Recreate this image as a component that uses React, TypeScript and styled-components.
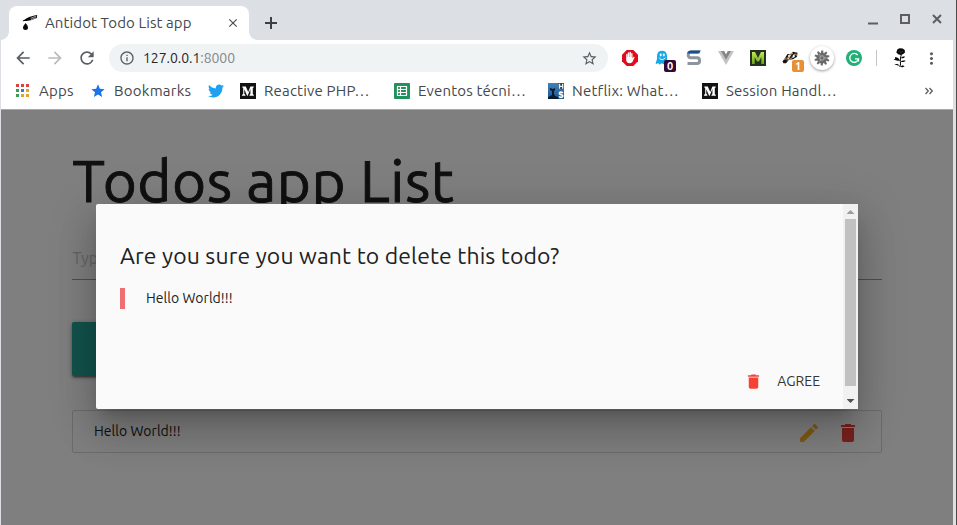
import React from 'react';
import styled, { createGlobalStyle } from 'styled-components';
import {
  MdArrowBack, MdArrowForward, MdRefresh, MdInfoOutline, MdStarBorder, MdStar,
  MdDelete, MdEdit, MdMoreVert, MdClose,
} from 'react-icons/md';
import { FaTwitter } from 'react-icons/fa';

const Global = createGlobalStyle`
  * { box-sizing: border-box; }
  body { margin: 0; overflow: hidden; font-family: Ubuntu, "Noto Sans", sans-serif; }
  svg { display: block; flex: none; }
`;

const Window = styled.div`
  width: 957px;
  height: 525px;
  display: flex;
  flex-direction: column;
  overflow: hidden;
  background: #dcdfe4;
  border-right: 1px solid #4b4b49;
`;

const Label = styled.span<{ $size: number; $spacing?: number; $color?: string }>`
  font-size: ${p => p.$size}px;
  letter-spacing: ${p => p.$spacing ?? 0}px;
  color: ${p => p.$color ?? '#45484c'};
  line-height: 1.2;
  white-space: pre;
`;

const TabStrip = styled.div`
  height: 40px;
  flex: none;
  display: flex;
  align-items: flex-end;
  padding-left: 9px;
`;

const Tab = styled.div`
  position: relative;
  width: 240px;
  height: 34px;
  border-radius: 8px 8px 0 0;
  background: #fff;
  display: flex;
  align-items: center;
  padding: 0 9px 0 13px;
  &::before, &::after {
    content: '';
    position: absolute;
    bottom: 0;
    width: 8px;
    height: 8px;
  }
  &::before { left: -8px; background: radial-gradient(circle at 0 0, transparent 7.5px, #fff 8px); }
  &::after { right: -8px; background: radial-gradient(circle at 100% 0, transparent 7.5px, #fff 8px); }
`;

const TabTitle = styled.div`
  flex: 1;
  display: flex;
  padding-left: 7px;
`;

const NewTab = styled.div`
  width: 44px;
  height: 34px;
  display: grid;
  place-items: center;
`;

const WindowControls = styled.div`
  margin-left: auto;
  height: 40px;
  display: flex;
  padding-right: 3px;
`;

const WindowButton = styled.div`
  width: 32px;
  height: 38px;
  display: grid;
  place-items: center;
`;

const Toolbars = styled.div`
  flex: none;
  width: 952px;
  margin-left: 1px;
  height: 70px;
  background: #fff;
  border-bottom: 1px solid #a9a9a9;
`;

const AddressBar = styled.div`
  height: 36px;
  display: flex;
  align-items: center;
  padding-left: 6px;
`;

const Slot = styled.div<{ $width?: number; $color?: string }>`
  position: relative;
  width: ${p => p.$width ?? 32}px;
  height: 32px;
  flex: none;
  display: grid;
  place-items: center;
  color: ${p => p.$color ?? '#5a5d62'};
`;

const Omnibox = styled.div`
  width: 499px;
  height: 28px;
  margin: 0 6px 0 6px;
  border-radius: 14px;
  background: #f0f3f4;
  display: flex;
  align-items: center;
  padding: 0 10px 0 10px;
  color: #5a5d62;
`;

const Url = styled.div`
  flex: 1;
  display: flex;
  padding-left: 8px;
`;

const Badge = styled.span<{ $bg: string }>`
  position: absolute;
  left: 18px;
  top: 18px;
  width: 12px;
  height: 12px;
  border-radius: 2px;
  background: ${p => p.$bg};
  color: #fff;
  font: bold 11px/12px Ubuntu, "Noto Sans", sans-serif;
  text-align: center;
`;

const Halo = styled.div`
  width: 24px;
  height: 24px;
  border-radius: 50%;
  background: #fff;
  box-shadow: 0 1px 3px rgba(0, 0, 0, 0.4);
  display: grid;
  place-items: center;
`;

const Divider = styled.div`
  width: 1px;
  height: 16px;
  margin: 0 7px 0 6px;
  background: #c4c7ca;
`;

const BookmarksBar = styled.div`
  height: 30px;
  display: flex;
  align-items: center;
  padding-left: 15px;
`;

const Bookmark = styled.div<{ $width: number; $gap?: number }>`
  width: ${p => p.$width}px;
  flex: none;
  display: flex;
  align-items: center;
  gap: ${p => p.$gap ?? 8}px;
`;

const Viewport = styled.main`
  position: relative;
  flex: 1;
  width: 952px;
  margin-left: 1px;
  background: #fff;
  overflow: hidden;
`;

const Content = styled.div`
  width: 810px;
  margin-left: 71px;
  padding-top: 33px;
`;

const Title = styled.h1`
  margin: 0;
  height: 76px;
  padding-left: 0.5px;
  font-size: 58.4px;
  font-weight: 400;
  line-height: 76px;
  letter-spacing: 0.5px;
  -webkit-text-stroke: 0.9px #212121;
  white-space: nowrap;
  color: #212121;
`;

const Field = styled.div`
  height: 48px;
  margin: 13px 0 42px;
  padding: 6px 0 0 0.5px;
  border-bottom: 1px solid #9e9e9e;
  display: flex;
  align-items: center;
`;

const AddButton = styled.div`
  width: 360px;
  height: 54px;
  border-radius: 2px;
  background: #26a69a;
  box-shadow: 0 2px 2px rgba(0, 0, 0, 0.24), 0 3px 1px -2px rgba(0, 0, 0, 0.2), 0 1px 5px rgba(0, 0, 0, 0.3);
`;

const TodoItem = styled.div`
  margin-top: 34px;
  height: 43px;
  border: 1px solid #d8d8d8;
  border-radius: 2px;
  display: flex;
  align-items: center;
  padding: 0 21px 0 21px;
`;

const Actions = styled.div`
  margin-left: auto;
  padding-top: 2px;
  display: flex;
  gap: 15px;
`;

const Overlay = styled.div`
  position: absolute;
  inset: 0;
  background: rgba(0, 0, 0, 0.5);
`;

const Modal = styled.div`
  position: absolute;
  left: 95px;
  top: 94px;
  width: 762px;
  height: 205px;
  display: flex;
  background: #fafafa;
  border-radius: 2px;
  box-shadow: 0 24px 38px 3px rgba(0, 0, 0, 0.14), 0 9px 46px 8px rgba(0, 0, 0, 0.12),
    0 11px 15px -7px rgba(0, 0, 0, 0.2);
`;

const ModalBody = styled.div`
  flex: 1;
  display: flex;
  flex-direction: column;
  padding: 38px 23px 0 24px;
`;

const Question = styled.div`
  height: 46px;
  display: flex;
  align-items: flex-start;
`;

const Quote = styled.div`
  height: 21px;
  border-left: 5px solid #ee6e73;
  padding-left: 21px;
  display: flex;
  align-items: center;
`;

const ModalFooter = styled.div`
  display: flex;
  justify-content: flex-end;
  align-items: center;
  height: 20px;
  margin-top: 62px;
  gap: 14px;
`;

const Scrollbar = styled.div`
  width: 15px;
  background: #f1f1f1;
  display: flex;
  flex-direction: column;
  align-items: center;
`;

const Arrow = styled.div<{ $down?: boolean }>`
  width: 8px;
  height: 4px;
  margin: ${p => (p.$down ? '13px 0 0' : '6px 0 5px')};
  background: ${p => (p.$down ? '#505050' : '#9b9b9b')};
  clip-path: ${p => (p.$down ? 'polygon(0 0, 100% 0, 50% 100%)' : 'polygon(50% 0, 100% 100%, 0 100%)')};
`;

const Thumb = styled.div`
  width: 11px;
  height: 167px;
  background: #c1c1c1;
`;

const DropperIcon = () => (
  <svg width="16" height="16" viewBox="0 0 16 16">
    <path d="M.8 5.600C3 4.400 5.500 2.400 8 1.700L14.400 0l1 .7-.7 1.200.5.4-.8 1L9 5.200C6.500 5.700 3 6.100.9 6.200z" fill="#080808" />
    <path d="M8.500 3.300 14 1.200M9 4.600l5-1.900" stroke="#fff" strokeWidth=".6" />
    <path d="M3.600 8c.8 1.400 2.400 2.600 2.400 4.400a2.500 2.500 0 0 1-5 0C1 10.600 3 9.500 3.600 8z" fill="#080808" />
  </svg>
);

const MediumIcon = () => (
  <svg width="16" height="16" viewBox="0 0 16 16">
    <rect width="16" height="16" fill="#121212" />
    <path d="M2.300 3.500h3.500L8.200 9l2.200-5.500h3.400v.8l-1 .8v6l1 .8v.8H9.400v-.8l1-.8V6L7.700 12.700h-.6L4.300 6.200v4.500l1.100 1.200v.8H2v-.8l1.200-1.200V5.200l-.9-.9z" fill="#fff" />
  </svg>
);

const SheetsIcon = () => (
  <svg width="16" height="16" viewBox="0 0 16 16">
    <rect width="16" height="16" rx="1" fill="#23915a" />
    <path d="M3.500 3.500h9v9h-9zM3.500 6.500h9M3.500 9.500h9M6.500 3.500v9" fill="none" stroke="#fff" strokeWidth="1.200" />
  </svg>
);

const ScalabilityIcon = () => (
  <svg width="16" height="16" viewBox="0 0 16 16">
    <defs>
      <linearGradient id="sky" x2="0" y2="1">
        <stop stopColor="#3f82bb" />
        <stop offset="1" stopColor="#1c568c" />
      </linearGradient>
    </defs>
    <rect width="16" height="16" fill="url(#sky)" />
    <path d="M10.500 0H16v6h-5.500z" fill="#2b4560" />
    <path d="M2 5l3 1 2-1v2L6 8v3l1 2 3 1v2H0v-2l4-2V8L2 7z" fill="#071b30" />
    <path d="M11.500.800v5M14.700.800v5M11.500 3.300h3.200" stroke="#e8eef4" strokeWidth="1.300" />
    <path d="M14.700 10.200c-.5-1.400-3.300-1.300-3.300.2 0 1.600 3.400.9 3.400 2.700 0 1.700-3.100 1.600-3.600.1" fill="none" stroke="#fff" strokeWidth="1.700" />
  </svg>
);

const appColors = ['#d6453d', '#d6453d', '#d6453d', '#3f9a57', '#3277e6', '#e0a52d', '#3f9a57', '#e0a52d', '#e0a52d'];

const AppsIcon = () => (
  <svg width="14" height="14" viewBox="0 0 14 14">
    {appColors.map((c, i) => (
      <rect key={i} x={(i % 3) * 5} y={Math.floor(i / 3) * 5} width="3" height="3" fill={c} />
    ))}
  </svg>
);

const BlockerIcon = () => (
  <svg width="18" height="18" viewBox="0 0 18 18">
    <path d="M5.700 1h6.600L17 5.700v6.600L12.300 17H5.700L1 12.300V5.700z" fill="#e10b1d" />
    <path d="M5.200 9V5.500c0-.9 1.300-.9 1.300 0V8h.3V4.100c0-1 1.400-1 1.400 0V8h.3V3.600c0-1 1.400-1 1.400 0V8h.3V4.700c0-1 1.300-1 1.300 0v4.700l.7-1.200c.5-.8 1.600-.4 1.200.5l-1.500 3.400c-.5 1.500-1.500 2.100-3 2.100-2.500 0-3.700-1.200-3.700-3.500z" fill="#fff" />
  </svg>
);

const GhostIcon = () => (
  <svg width="16" height="16" viewBox="0 0 16 16">
    <path d="M3 6C3 2.500 5 .8 8 .8s5 1.700 5 5.200V14l-1.900-.8-1.700 1-1.800-1-2 1.500-1.100-1.400-2.800.7C1.800 11.500 3 10.500 3 8z" fill="#16a8e8" />
    <ellipse cx="6.700" cy="5" rx="1" ry="1.400" fill="#fff" />
    <ellipse cx="9.800" cy="5" rx="1" ry="1.400" fill="#fff" />
    <path d="M5.200 7.600c1 2.600 5 2.600 6 0" fill="none" stroke="#fff" />
  </svg>
);

const StylusIcon = () => (
  <svg width="16" height="18" viewBox="0 0 16 18">
    <path d="M14 3H4.500C1.500 3 1.500 8.800 4.500 8.800H11c3.400 0 3.400 5.700 0 5.700H1.500" fill="none" stroke="#8b959b" strokeWidth="3" />
    <path d="M15 1.400H5C3.300 1.400 1.700 2.300 1.300 4.600h11z" fill="#194f8c" />
  </svg>
);

const VueIcon = () => (
  <svg width="16" height="14" viewBox="0 0 16 14">
    <path d="M0 0h6l2 3.500L10 0h6L8 14z" fill="#c3c3c3" />
    <path d="M3 0h3.100L8 3.400 9.900 0H13L8 8.700z" fill="#858585" />
  </svg>
);

const GreenMIcon = () => (
  <svg width="16" height="16" viewBox="0 0 16 16">
    <defs>
      <linearGradient id="lime" x2="0" y2="1">
        <stop stopColor="#c4e85c" />
        <stop offset="1" stopColor="#64a616" />
      </linearGradient>
    </defs>
    <rect width="16" height="16" fill="#25301e" />
    <path d="M2 14V2h3l3 6 3-6h3v12h-2.700V7L9 11.500H7L4.700 7v7z" fill="url(#lime)" />
  </svg>
);

const BadgerIcon = () => (
  <svg width="16" height="16" viewBox="0 0 16 16">
    <path d="M.5 11.500 3 8l2.500-4L8 4.300 11 1.800l4.500 1-.5 4-4 2.500-4 .5-3 3.500H1.500z" fill="#17120f" />
    <path d="M1.500 9.800 5 7.500l5-3.700L6.500 9.300z" fill="#f0c48d" />
    <path d="m4 11.300 5-3.500 3.500-4.300.3 3.500-4 1.700z" fill="#fff" />
    <path d="M7.500 4.500 11 3M13.800 3.500l.5 2.200" stroke="#f3b877" />
    <path d="M3.500 9.500 6.500 7M8.500 8.500l2.500-2" stroke="#17120f" strokeWidth=".8" />
    <path d="m6 5 2.500.3-2 1.900z" fill="#fff" />
  </svg>
);

const GearIcon = () => (
  <svg width="16" height="16" viewBox="-8 -8 16 16">
    <circle r="5.300" fill="#696969" />
    {[0, 36, 72, 108, 144, 180, 216, 252, 288, 324].map(a => (
      <path key={a} d="M-1.300-4.800-.5-7.700 1.300-7.300 1.300-4.800z" fill="#696969" transform={`rotate(${a})`} />
    ))}
    <circle r="2.300" fill="none" stroke="#b2b2b2" strokeWidth=".8" />
    <path d="M-2.800-3.800-.8-.8M1.200 0H4.800M-2.500 3.500-.7 1" stroke="#b2b2b2" strokeWidth=".8" />
  </svg>
);

const GrammarIcon = () => (
  <svg width="16" height="16" viewBox="0 0 16 16">
    <circle cx="8" cy="8" r="8" fill="#22b077" />
    <path d="M11.700 5.200a4.400 4.400 0 1 0 .8 3.600H9M12.500 8.800v2.700" fill="none" stroke="#fff" strokeWidth="1.300" />
  </svg>
);

const RoseIcon = () => (
  <svg width="14" height="20" viewBox="0 0 14 20">
    <path d="M4.500 1.300 6.500.3l3.200.3 2 1.400.3 2.500L9.900 6.300 7.800 7 5 6.200 3.300 4.200z" fill="#080808" />
    <path d="M8.300 6.500 7.500 10l-.2 3.500.3 2.500-.8 3" fill="none" stroke="#080808" strokeWidth="1" />
    <path d="M7 12.800C5 13 3 12.500.5 11.500l1.700-.8L2 9l2 .5c1.500.6 2.500 1.700 3 3.300zM8 10.300c.2-1.200 1.800-1.900 4-1.700-.3 1.300-1.700 2-4 1.700zM7.500 13.800c1.300-1.300 3-1.600 5.300-1-1.300 1.100-2.800 1.500-5.300 1zM6.800 17.500c-1.800.4-3.300-.2-5.300-1.400 2.400-.5 4.100-.1 5.300 1.400zM7 19l2.500-1.800 2.200 1-2 1.100z" fill="#080808" />
    <path d="M5.500 3.200c2 1.500 3.300 1.200 4.500-.2" fill="none" stroke="#555" strokeWidth=".5" />
  </svg>
);

export default function App() {
  return (
    <Window>
      <Global />
      <TabStrip>
        <Tab>
          <DropperIcon />
          <TabTitle><Label $size={15} $spacing={0.1}>Antidot Todo List app</Label></TabTitle>
          <MdClose size={14} color="#484b50" />
        </Tab>
        <NewTab>
          <svg width="12" height="12"><path d="M6 0v12M0 6h12" stroke="#3c3f43" strokeWidth="2" /></svg>
        </NewTab>
        <WindowControls>
          <WindowButton>
            <svg width="12" height="12"><path d="M1 10.500h10" stroke="#5c5e62" strokeWidth="2" /></svg>
          </WindowButton>
          <WindowButton>
            <svg width="12" height="12"><rect x="2" y="2" width="8" height="8" fill="none" stroke="#5c5e62" strokeWidth="2" /></svg>
          </WindowButton>
          <WindowButton>
            <svg width="12" height="12"><path d="m2 2 8 8m0-8-8 8" stroke="#5c5e62" strokeWidth="2" /></svg>
          </WindowButton>
        </WindowControls>
      </TabStrip>

      <Toolbars>
        <AddressBar>
          <Slot><MdArrowBack size={20} /></Slot>
          <Slot $color="#b9bbbe"><MdArrowForward size={20} /></Slot>
          <Slot><MdRefresh size={20} /></Slot>
          <Omnibox>
            <MdInfoOutline size={16} />
            <Url>
              <Label $size={14} $spacing={-0.05} $color="#25282b">127.0.0.1</Label>
              <Label $size={14} $spacing={-0.05} $color="#85888c">:8000</Label>
            </Url>
            <MdStarBorder size={17} />
          </Omnibox>
          <Slot><BlockerIcon /></Slot>
          <Slot><GhostIcon /><Badge $bg="#330a36">0</Badge></Slot>
          <Slot><StylusIcon /></Slot>
          <Slot><VueIcon /></Slot>
          <Slot><GreenMIcon /></Slot>
          <Slot><BadgerIcon /><Badge $bg="#e98f35">1</Badge></Slot>
          <Slot><Halo><GearIcon /></Halo></Slot>
          <Slot><GrammarIcon /></Slot>
          <Divider />
          <Slot><RoseIcon /></Slot>
          <Slot $width={30}><MdMoreVert size={19} /></Slot>
        </AddressBar>
        <BookmarksBar>
          <Bookmark $width={74} $gap={9}><AppsIcon /><Label $size={15} $spacing={0.2}>Apps</Label></Bookmark>
          <Bookmark $width={118} $gap={8}><MdStar size={16} color="#1a73e8" /><Label $size={15} $spacing={0.25}>Bookmarks</Label></Bookmark>
          <Bookmark $width={32}><FaTwitter size={16} color="#1da1f2" /></Bookmark>
          <Bookmark $width={154}><MediumIcon /><Label $size={15} $spacing={0.2}>Reactive PHP…</Label></Bookmark>
          <Bookmark $width={154}><SheetsIcon /><Label $size={15} $spacing={0.2}>Eventos técni…</Label></Bookmark>
          <Bookmark $width={154}><ScalabilityIcon /><Label $size={15} $spacing={0.2}>Netflix: What…</Label></Bookmark>
          <Bookmark $width={222}><MediumIcon /><Label $size={15} $spacing={0.2}>Session Handl…</Label></Bookmark>
          <svg width="10" height="8" viewBox="0 0 10 8">
            <path d="m1.500 1 2.800 3-2.800 3M5.500 1l2.800 3-2.800 3" fill="none" stroke="#5a5d62" strokeWidth="1.300" />
          </svg>
        </BookmarksBar>
      </Toolbars>

      <Viewport>
        <Content>
          <Title>Todos app List</Title>
          <Field><Label $size={16} $color="#c9c9c9">Typ</Label></Field>
          <AddButton />
          <TodoItem>
            <Label $size={14} $spacing={0.05} $color="#212121">Hello World!!!</Label>
            <Actions>
              <MdEdit size={24} color="#fbb62c" />
              <MdDelete size={24} color="#f3433a" />
            </Actions>
          </TodoItem>
        </Content>
        <Overlay />
        <Modal>
          <ModalBody>
            <Question>
              <Label $size={22.96} $spacing={0.13} $color="#212121">Are you sure you want to delete this todo?</Label>
            </Question>
            <Quote><Label $size={14} $spacing={0.05} $color="#212121">Hello World!!!</Label></Quote>
            <ModalFooter>
              <MdDelete size={19} color="#f44336" />
              <Label $size={14} $color="#343434">AGREE</Label>
            </ModalFooter>
          </ModalBody>
          <Scrollbar>
            <Arrow />
            <Thumb />
            <Arrow $down />
          </Scrollbar>
        </Modal>
      </Viewport>
    </Window>
  );
}
